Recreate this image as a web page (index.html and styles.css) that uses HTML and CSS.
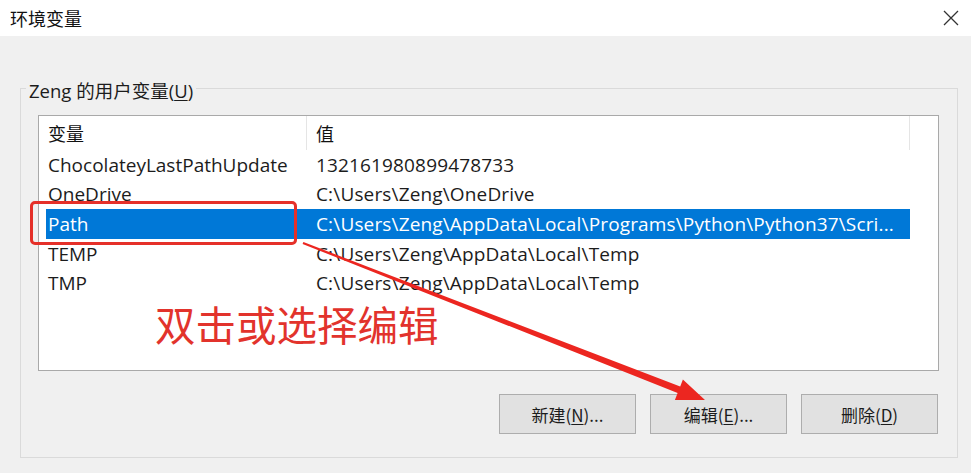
FILE: index.html
```html
<!DOCTYPE html>
<html lang="zh-CN">
<head>
<meta charset="utf-8">
<title>环境变量</title>
<link rel="stylesheet" href="styles.css">
</head>
<body>
<div class="window">
  <header class="titlebar">
    <span class="title">环境变量</span>
    <span class="close" aria-label="关闭">
      <svg width="16" height="16" viewBox="0 0 16 16"><path d="M1 1 L15 15 M15 1 L1 15" stroke="#333" stroke-width="1.3" fill="none"/></svg>
    </span>
  </header>
  <main class="content">
    <fieldset class="group">
      <legend class="group-label">Zeng 的用户变量(<u>U</u>)</legend>
      <div class="listview">
        <div class="lv-header">
          <div class="hcell c1">变量</div>
          <div class="hcell c2">值</div>
        </div>
        <div class="lv-rows">
          <div class="row"><span class="cell c1">ChocolateyLastPathUpdate</span><span class="cell c2">132161980899478733</span></div>
          <div class="row"><span class="cell c1">OneDrive</span><span class="cell c2">C:\Users\Zeng\OneDrive</span></div>
          <div class="row selected"><span class="cell c1">Path</span><span class="cell c2">C:\Users\Zeng\AppData\Local\Programs\Python\Python37\Scri...</span></div>
          <div class="row"><span class="cell c1">TEMP</span><span class="cell c2">C:\Users\Zeng\AppData\Local\Temp</span></div>
          <div class="row"><span class="cell c1">TMP</span><span class="cell c2">C:\Users\Zeng\AppData\Local\Temp</span></div>
        </div>
      </div>
      <div class="buttons">
        <button class="btn">新建(<u>N</u>)...</button>
        <button class="btn">编辑(<u>E</u>)...</button>
        <button class="btn">删除(<u>D</u>)</button>
      </div>
    </fieldset>
  </main>

  <div class="anno-box"></div>
  <div class="anno-text">双击或选择编辑</div>
  <svg class="anno-arrow" width="971" height="473" viewBox="0 0 971 473">
    <polygon fill="#ec2620" points="303.4,242.1 680.2,386.5 682.9,379.6 705,400 674.9,400 677.6,393.1 302.6,243.9"/>
  </svg>
</div>
</body>
</html>
```

FILE: styles.css
```css
* { box-sizing: border-box; }

html, body {
  margin: 0;
  padding: 0;
  width: 971px;
  height: 473px;
  overflow: hidden;
  background: #f0f0f0;
  font-family: "Open Sans", "Noto Sans CJK SC", sans-serif;
  color: #1c1c1c;
}

.window {
  position: relative;
  width: 971px;
  height: 473px;
}

.titlebar {
  height: 36px;
  background: #ffffff;
  display: flex;
  align-items: center;
  justify-content: space-between;
  padding: 0 12px 0 10px;
}

.title {
  font-family: "Noto Sans CJK SC", sans-serif;
  font-size: 18px;
  color: #111;
  line-height: 1;
}

.close {
  display: flex;
  width: 16px;
  height: 16px;
}

.content {
  padding-top: 39px;
}

.group {
  margin: 0 13px 0 20px;
  padding: 13px 18px 23px 17px;
  border: 1px solid #dadada;
  min-width: 0;
}

.group-label {
  margin-left: -12px;
  padding: 5px 3px 0 3px;
  font-size: 18.5px;
  line-height: 22px;
  color: #1c1c1c;
}

.group-label u, .btn u { text-decoration-thickness: 1px; text-underline-offset: 2px; }

.listview {
  height: 256px;
  background: #ffffff;
  border: 1px solid #a9a9a9;
  overflow: hidden;
}

.lv-header {
  display: flex;
  height: 34px;
  width: 871px;
}

.hcell {
  display: flex;
  align-items: center;
  padding-left: 9px;
  font-family: "Noto Sans CJK SC", sans-serif;
  font-size: 18px;
  color: #111;
  border-right: 1px solid #e5e5e5;
}

.hcell.c1 { width: 268px; }
.hcell.c2 { flex: 1; }

.lv-rows {
  margin-left: 7px;
  width: 864px;
}

.row {
  display: flex;
  align-items: center;
  height: 29.6px;
  font-size: 19px;
  white-space: nowrap;
}

.row .cell.c1 {
  width: 261px;
  padding-left: 2px;
}

.row .cell.c2 {
  padding-left: 9px;
  flex: 1;
  overflow: hidden;
  letter-spacing: 0.15px;
}

.row.selected {
  background: #0078d7;
  color: #ffffff;
}

.buttons {
  display: flex;
  justify-content: flex-end;
  gap: 14px;
  margin-top: 23px;
  padding-right: 1px;
}

.btn {
  width: 137px;
  height: 40px;
  background: #e1e1e1;
  border: 1px solid #adadad;
  border-radius: 0;
  font-family: "Noto Sans CJK SC", sans-serif;
  font-size: 17px;
  color: #1c1c1c;
  padding: 0;
}

.anno-box {
  position: absolute;
  left: 30px;
  top: 201px;
  width: 267px;
  height: 44px;
  border: 3px solid #e53029;
  border-radius: 5px;
}

.anno-text {
  position: absolute;
  left: 155px;
  top: 304px;
  font-family: "Noto Sans CJK SC", sans-serif;
  font-size: 40.5px;
  line-height: 40px;
  color: #e2332c;
  white-space: nowrap;
}

.anno-arrow {
  position: absolute;
  left: 0;
  top: 0;
  pointer-events: none;
}
```
